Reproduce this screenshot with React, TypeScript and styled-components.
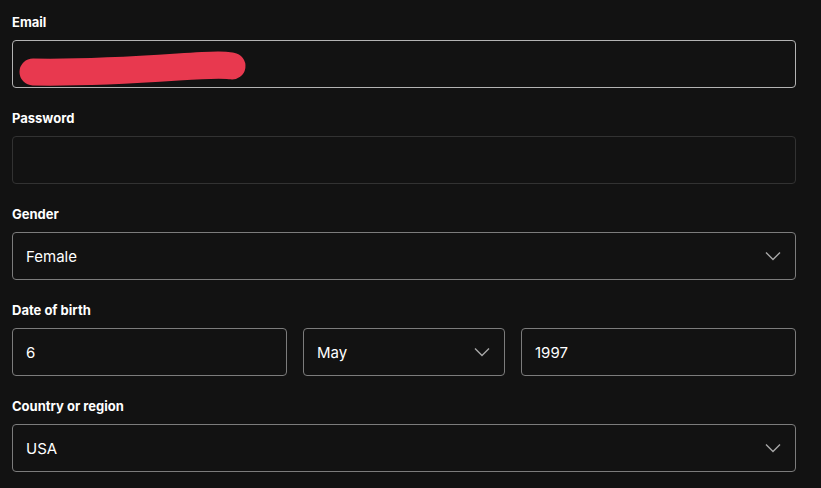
import styled, { createGlobalStyle } from 'styled-components';

const GlobalStyle = createGlobalStyle`
    html, body {
        margin: 0;
        padding: 0;
        background: #121212;
    }
    body {
        font-family: Inter, "Noto Sans", "Liberation Sans", sans-serif;
        color: #ffffff;
    }
`;

const Form = styled.form`
    width: 784px;
    padding: 12px 12px 0;
    display: flex;
    flex-direction: column;
    gap: 20px;
`;

const Field = styled.div`
    display: flex;
    flex-direction: column;
    gap: 8px;
`;

const Label = styled.label`
    font-size: 13px;
    font-weight: 700;
    line-height: 20px;
    color: #ffffff;
`;

const Box = styled.div<{ $border?: string }>`
    position: relative;
    box-sizing: border-box;
    height: 48px;
    border: 1px solid ${(p) => p.$border ?? '#7c7c7c'};
    border-radius: 4px;
    background: #121212;
    display: flex;
    align-items: center;
    justify-content: space-between;
    padding: 0 14px 0 13px;
`;

const Value = styled.span`
    font-size: 15px;
    font-weight: 400;
    color: #ffffff;
`;

const DateRow = styled.div`
    display: grid;
    grid-template-columns: 1fr 202px 1fr;
    gap: 16px;
`;

const Scribble = styled.svg`
    position: absolute;
    left: 0;
    top: 0;
    pointer-events: none;
`;

function Chevron() {
    return (
        <svg width="16" height="10" viewBox="0 0 16 10" fill="none">
            <path d="M1 1.5 L8 8.5 L15 1.5" stroke="#a7a7a7" strokeWidth="1.4" />
        </svg>
    );
}

function App() {
    return (
        <>
            <GlobalStyle />
            <Form>
                <Field>
                    <Label>Email</Label>
                    <Box $border="#b3b3b3">
                        <Scribble width="260" height="48" viewBox="0 0 260 48">
                            <path
                                d="M20 31 C 70 32, 120 29, 165 26 S 212 24, 219 25"
                                stroke="#e8394f"
                                strokeWidth="27"
                                strokeLinecap="round"
                                fill="none"
                            />
                        </Scribble>
                    </Box>
                </Field>
                <Field>
                    <Label>Password</Label>
                    <Box $border="#323232" />
                </Field>
                <Field>
                    <Label>Gender</Label>
                    <Box>
                        <Value>Female</Value>
                        <Chevron />
                    </Box>
                </Field>
                <Field>
                    <Label>Date of birth</Label>
                    <DateRow>
                        <Box>
                            <Value>6</Value>
                        </Box>
                        <Box>
                            <Value>May</Value>
                            <Chevron />
                        </Box>
                        <Box>
                            <Value>1997</Value>
                        </Box>
                    </DateRow>
                </Field>
                <Field>
                    <Label>Country or region</Label>
                    <Box>
                        <Value>USA</Value>
                        <Chevron />
                    </Box>
                </Field>
            </Form>
        </>
    );
}

export default App;
